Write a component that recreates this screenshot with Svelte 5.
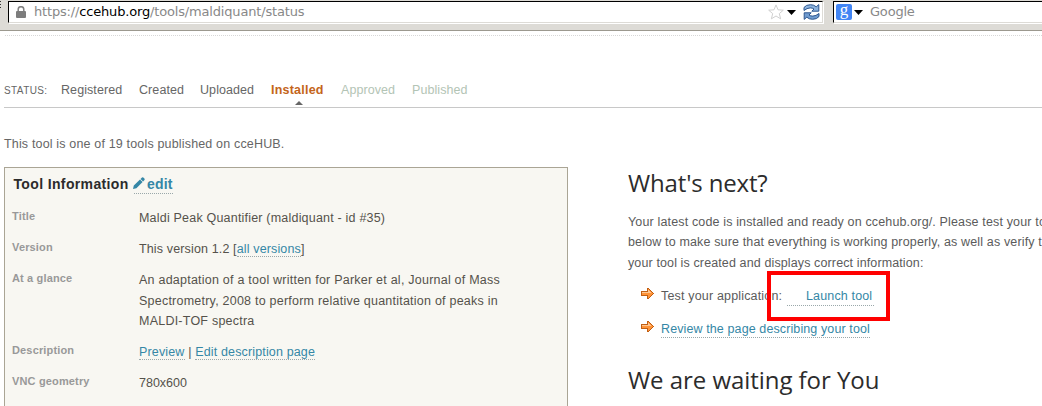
<script>
  const stages = [
    { name: 'Registered', cls: 'registered' },
    { name: 'Created', cls: 'created' },
    { name: 'Uploaded', cls: 'uploaded' },
    { name: 'Installed', cls: 'active' },
    { name: 'Approved', cls: 'approved future' },
    { name: 'Published', cls: 'published future' }
  ];
</script>

{#snippet arrow()}
  <svg class="arrow" width="13" height="12" viewBox="0 0 13 12" shape-rendering="crispEdges">
    <path d="M0 3H6V0H8V1H9V2H10V3H11V4H12V5H13V6H12V7H11V8H10V9H9V10H8V11H6V8H0Z" fill="#c05f14" />
    <path d="M1 4H7V1H8V2H9V3H10V4H11V5H12V6H11V7H10V8H9V9H8V10H7V7H1Z" fill="#ff9438" />
    <path d="M1 4H7V2H8V3H9V4H10V5H1Z" fill="#ffc894" />
  </svg>
{/snippet}

<div class="window">
  <header class="toolbar">
    <div class="grip"></div>
    <div class="field address">
      <svg class="lock" width="10" height="12" viewBox="0 0 10 12">
        <path d="M2.2 6V3.5a2.8 2.8 0 0 1 5.6 0V6" fill="none" stroke="#808080" stroke-width="1.5" />
        <rect x="0" y="5" width="10" height="7" rx="1" fill="#7d7d7d" />
      </svg>
      <span class="url">https://<b>ccehub.org</b>/tools/maldiquant/status</span>
      <svg class="star" width="16" height="16" viewBox="0 0 16 16">
        <path d="M8 .9 10 5.8 15.3 6.2 11.3 9.6 12.6 14.8 8 12 3.4 14.8 4.7 9.6 .7 6.2 6 5.8Z" fill="#fff" stroke="#d0d0d0" />
      </svg>
      <svg class="caret" width="9" height="5" viewBox="0 0 9 5"><path d="M0 0H9L4.5 5Z" /></svg>
      <svg class="reload" width="17" height="16" viewBox="0 0 17 16">
        <path d="M1 6.5V3.5Q3 .7 7.5.7Q11 .7 13.2 2.8L15.8.6V7.2H8.8L11 5Q9.3 3.8 7.2 3.9Q4 4 1 6.5Z" fill="#8db3dd" stroke="#2d568f" />
        <path d="M16 9.5V12.5Q14 15.3 9.5 15.3Q6 15.3 3.8 13.2L1.2 15.4V8.8H8.2L6 11Q7.7 12.2 9.8 12.1Q13 12 16 9.5Z" fill="#6f9bcf" stroke="#2d568f" />
      </svg>
    </div>
    <div class="field search">
      <span class="engine">g</span>
      <svg class="caret" width="9" height="5" viewBox="0 0 9 5"><path d="M0 0H9L4.5 5Z" /></svg>
      <span class="placeholder">Google</span>
    </div>
  </header>

  <main>
    <nav>
      <span class="status">STATUS:</span>
      {#each stages as s}<span class={s.cls}>{s.name}</span>{/each}
    </nav>
    <p class="count">This tool is one of 19 tools published on cceHUB.</p>

    <div class="columns">
      <section class="panel">
        <h3><span class="heading">Tool Information</span><a class="edit" href="#edit"><svg width="12" height="12" viewBox="0 0 12 12"><path d="M0 12 .8 8.6 7 2.4 9.6 5 3.4 11.2ZM7.5 1.9 9 .4Q9.6-.1 10.3.5L11.4 1.6Q12 2.3 11.5 3L10.1 4.5Z" fill="#3587a6" /></svg><span>edit</span></a></h3>
        <dl>
          <dt>Title</dt>
          <dd><span class="t1">Maldi Peak Quantifier (maldiquant - id #35)</span></dd>
          <dt>Version</dt>
          <dd><span class="t2">This version 1.2 [<a href="#versions">all versions</a>]</span></dd>
          <dt>At a glance</dt>
          <dd class="glance">
            <span>An adaptation of a tool written for Parker et al, Journal of Mass</span>
            <span>Spectrometry, 2008 to perform relative quantitation of peaks in</span>
            <span>MALDI-TOF spectra</span>
          </dd>
          <dt>Description</dt>
          <dd><span class="t6"><a href="#preview">Preview</a> | <a href="#description">Edit description page</a></span></dd>
          <dt>VNC geometry</dt>
          <dd>780x600</dd>
        </dl>
      </section>

      <section class="next">
        <h2 class="h-next">What's next?</h2>
        <p class="intro">
          <span class="n1">Your latest code is installed and ready on ccehub.org/. Please test your tool</span>
          <span class="n2">below to make sure that everything is working properly, as well as verify that</span>
          <span class="n3">your tool is created and displays correct information:</span>
        </p>
        <ul>
          <li>{@render arrow()}<span class="n4">Test your application:</span><a class="launch" href="#launch">Launch tool</a><i class="mark"></i></li>
          <li>{@render arrow()}<a class="review" href="#review">Review the page describing your tool</a></li>
        </ul>
        <h2 class="h-wait">We are waiting for You</h2>
      </section>
    </div>
  </main>
</div>

<style>
  :global(body) { background: #fff; overflow: hidden; }
  .window { width: 1042px; height: 406px; overflow: hidden; font: 12.5px/20px "Liberation Sans", Arial, sans-serif; color: #5b5b5b; }
  .toolbar { box-sizing: border-box; height: 31px; padding-top: 1px; display: flex; background: #dddbd6; border-bottom: 1px solid #9c998f; }
  .grip { width: 8px; height: 8px; flex: none; background: repeating-linear-gradient(#333 0 1px, transparent 1px 3px) 0 0 / 1px 8px no-repeat; }
  .field { box-sizing: border-box; height: 22px; display: flex; align-items: center; background: #fff; border: 1px solid #000; border-right-color: #dddbd6; border-bottom-color: #dddbd6; font: 13px/20px "DejaVu Sans", sans-serif; color: #888; white-space: nowrap; box-shadow: 1px 1px 0 #fff; }
  .address { width: 815px; padding: 0 2px 0 7px; flex: none; }
  .search { width: 220px; margin-left: 10px; padding-left: 2px; flex: none; }
  .url { margin-left: 8px; margin-right: auto; letter-spacing: -.17px; }
  .url b { font-weight: 400; color: #000; }
  .star { margin-right: 3px; }
  .reload { margin-left: 7px; }
  .engine { width: 16px; height: 16px; border-radius: 2px; background: #4285f4; color: #fff; font: 17px/11px "Liberation Serif", serif; text-align: center; margin-right: 2px; }
  .placeholder { margin-left: 7px; letter-spacing: -.2px; }

  main { border-top: 1px dotted #d8d8d8; margin: 4px 0 0 5px; }
  nav { box-sizing: border-box; height: 72px; margin-left: -1px; padding-top: 44px; display: flex; border-bottom: 1px solid #c8c8c8; color: #666; white-space: nowrap; letter-spacing: .08px; }
  nav span { flex: none; }
  .status { width: 57px; font-size: 10px; letter-spacing: .4px; line-height: 21px; }
  .registered { width: 78px; }
  .created { width: 61px; }
  .uploaded { width: 71px; }
  .active { width: 70px; color: #c4651a; font-weight: 700; letter-spacing: .22px; position: relative; }
  .active::after { content: ""; position: absolute; left: 24px; top: 21px; border: 4px solid transparent; border-top: 0; border-bottom-color: #666; }
  .approved { width: 71px; }
  .future { color: #b3c4b5; }
  .count { margin: 26px 0 0 -1px; height: 33px; color: #666; letter-spacing: .165px; }
  .columns { display: flex; margin-left: -1px; }
  .panel { box-sizing: border-box; width: 564px; height: 260px; padding: 6px 7px; flex: none; border: 1px solid #aaa595; background: #f8f7f2; }
  h3 { margin: 0 0 0 1.5px; height: 27px; display: flex; font-size: 14px; line-height: 20px; color: #2b2b2b; }
  .heading { width: 115px; letter-spacing: .36px; white-space: nowrap; }
  .edit { display: flex; margin-left: 5.5px; height: 19px; letter-spacing: .2px; }
  .edit svg { margin: 3px 2px 0 -1px; }
  a { color: #3587a6; text-decoration: none; border-bottom: 1px dotted #9aa8aa; }
  dl { margin: 0; display: grid; grid-template-columns: 127px 1fr; }
  dt { font-size: 11px; font-weight: 700; color: #999; height: 31px; line-height: 30px; letter-spacing: .15px; }
  dd { margin: 0; height: 31px; line-height: 34px; color: #55524b; white-space: nowrap; }
  .t1 { letter-spacing: .2px; }
  .t2 { letter-spacing: .14px; }
  .t6 { letter-spacing: .15px; }
  .glance { height: 72px; box-sizing: border-box; padding-top: 7px; line-height: 20.5px; letter-spacing: .23px; }
  .glance span, .intro span { display: block; }
  .next { margin-left: 60px; width: 414px; white-space: nowrap; flex: none; }
  h2 { margin: 0; font: 24px/32px "Open Sans", sans-serif; color: #2c2c2c; letter-spacing: -.05px; }
  .h-next { letter-spacing: -.15px; }
  .intro { margin: 13px 0 0; line-height: 20.3px; letter-spacing: .15px; }
  .n3 { letter-spacing: .12px; }
  ul { list-style: none; margin: 13.5px 0 0; padding: 0 0 0 13px; }
  li { position: relative; display: flex; height: 33px; }
  .arrow { margin: 2px 7px 0 0; }
  .n4 { width: 121px; letter-spacing: .17px; }
  .launch { box-sizing: border-box; width: 87px; margin-left: 5px; padding-left: 19px; height: 20px; letter-spacing: .15px; }
  .review { height: 18px; letter-spacing: .11px; }
  .mark { position: absolute; box-sizing: border-box; left: 126px; top: -15px; width: 123px; height: 50px; border: 4px solid #f00; }
  .h-wait { margin-top: 12px; }
</style>
